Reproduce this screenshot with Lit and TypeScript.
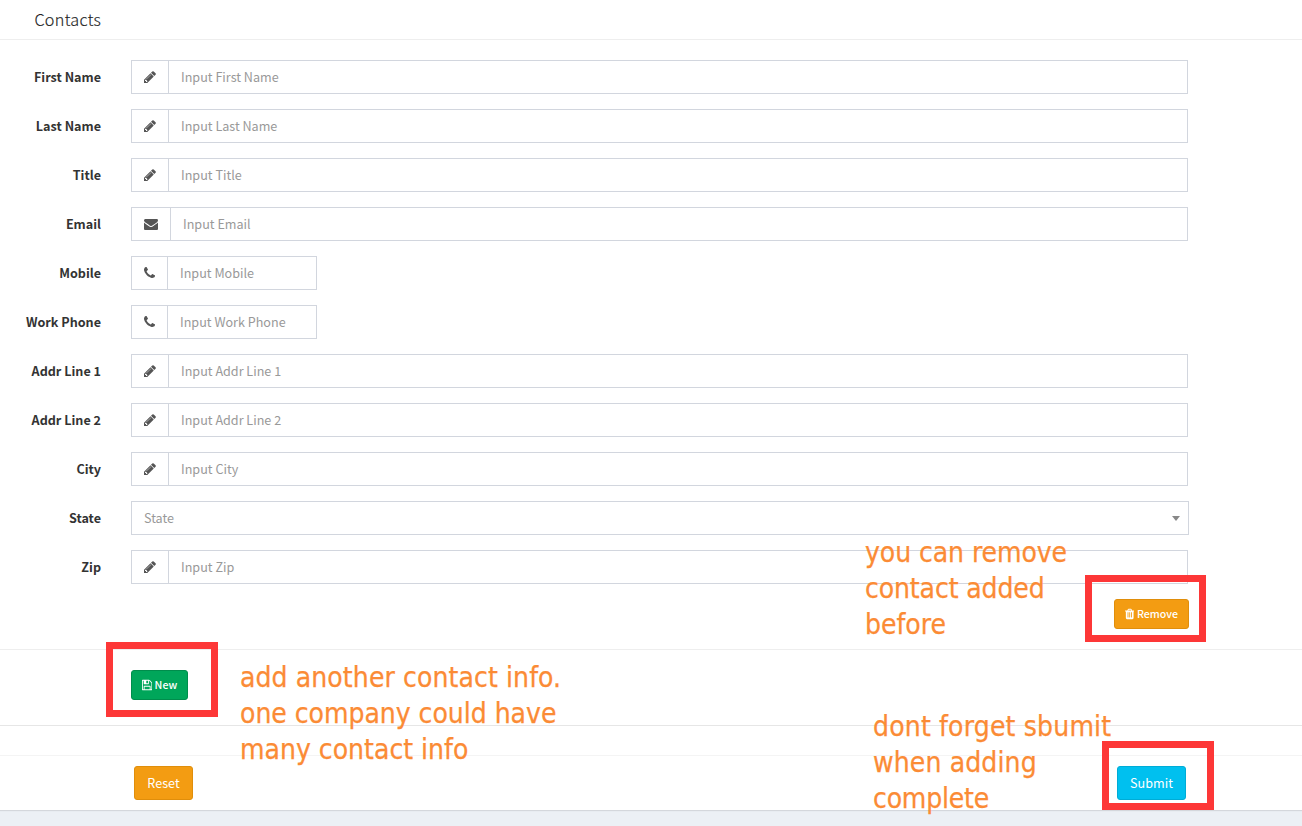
import { LitElement, html, css, svg } from "lit";
import { customElement } from "lit/decorators.js";
import { styleMap } from "lit/directives/style-map.js";
import { classMap } from "lit/directives/class-map.js";

type IconName = "pencil" | "envelope" | "phone" | "trash" | "floppy";

// Glyphs share a 1792-unit em; x and w give the horizontal slice each one occupies.
const ICONS: Record<IconName, { x: number; w: number; d: string }> = {
  pencil: {
    x: 128, w: 1536,
    d: "M491 1536l91-91-235-235-91 91v107h128v128h107zm523-928q0-22-22-22-10 0-17 7l-542 542q-7 7-7 17 0 22 22 22 10 0 17-7l542-542q7-7 7-17zm-54-192l416 416-832 832h-416v-416l832-832zm683 96q0 53-37 90l-166 166-416-416 166-165q36-38 90-38 53 0 91 38l235 234q37 39 37 91z",
  },
  envelope: {
    x: 0, w: 1792,
    d: "M1792 710v794q0 66-47 113t-113 47h-1472q-66 0-113-47t-47-113v-794q44 49 101 87 362 246 497 345 57 42 92.5 65.5t94.5 48 110 24.5h2q51 0 110-24.5t94.5-48 92.5-65.5q170-123 498-345 57-39 100-87zm0-294q0 79-49 151t-122 123q-376 261-468 325-10 7-42.5 31t-54 38.5-52 32.5-57.5 27-50 9h-2q-23 0-50-9t-57.5-27-52-32.5-54-38.5-42.5-31q-91-64-262-182.5t-205-142.5q-62-42-117-115.5t-55-136.5q0-78 41.5-130t118.5-52h1472q65 0 112.5 47t47.5 113z",
  },
  phone: {
    x: 192, w: 1408,
    d: "M1600 1240q0 27-10 70.5t-21 68.5q-21 50-122 106-94 51-186 51-27 0-53-3.5t-57.5-12.5-47-14.5-55.5-20.5-49-18q-98-35-175-83-127-79-264-216t-216-264q-48-77-83-175-3-9-18-49t-20.5-55.5-14.5-47-12.5-57.5-3.5-53q0-92 51-186 56-101 106-122 25-11 68.5-21t70.5-10q14 0 21 3 18 6 53 76 11 19 30 54t35 63.5 31 53.5q3 4 17.5 25t21.5 35.5 7 28.5q0 20-28.5 50t-62 55-62 53-28.5 46q0 9 5 22.5t8.5 20.5 14 24 11.5 19q76 137 174 235t235 174q2 1 19 11.5t24 14 20.5 8.5 22.5 5q18 0 46-28.5t53-62 55-62 50-28.5q14 0 28.5 7t35.5 21.5 25 17.5q25 15 53.5 31t63.5 35 54 30q70 35 76 53 3 7 3 21z",
  },
  trash: {
    x: 192, w: 1408,
    d: "M704 1376v-704q0-14-9-23t-23-9h-64q-14 0-23 9t-9 23v704q0 14 9 23t23 9h64q14 0 23-9t9-23zm256 0v-704q0-14-9-23t-23-9h-64q-14 0-23 9t-9 23v704q0 14 9 23t23 9h64q14 0 23-9t9-23zm256 0v-704q0-14-9-23t-23-9h-64q-14 0-23 9t-9 23v704q0 14 9 23t23 9h64q14 0 23-9t9-23zm-544-992h448l-48-117q-7-9-17-11h-317q-10 2-17 11zm928 32v64q0 14-9 23t-23 9h-96v948q0 83-47 143.5t-113 60.5h-832q-66 0-113-58.5t-47-141.5v-952h-96q-14 0-23-9t-9-23v-64q0-14 9-23t23-9h309l70-167q15-37 54-63t79-26h320q40 0 79 26t54 63l70 167h309q14 0 23 9t9 23z",
  },
  floppy: {
    x: 128, w: 1536,
    d: "M512 1536h768v-384h-768v384zm896 0h128v-896q0-14-10-38.5t-20-34.5l-281-281q-10-10-34-20t-39-10v416q0 40-28 68t-68 28h-576q-40 0-68-28t-28-68v-416h-128v1280h128v-416q0-40 28-68t68-28h832q40 0 68 28t28 68v416zm-384-928v-320q0-13-9.5-22.5t-22.5-9.5h-192q-13 0-22.5 9.5t-9.5 22.5v320q0 13 9.5 22.5t22.5 9.5h192q13 0 22.5-9.5t9.5-22.5zm640 32v928q0 40-28 68t-68 28h-1344q-40 0-68-28t-28-68v-1344q0-40 28-68t68-28h928q40 0 88 20t76 48l280 280q28 28 48 76t20 88z",
  },
};

function icon(name: IconName, size: number) {
  const { x, w, d } = ICONS[name];
  return html`<svg width=${(w / 1792) * size} height=${size} viewBox="${x} 0 ${w} 1792" aria-hidden="true">
    ${svg`<path fill="currentColor" d=${d}></path>`}
  </svg>`;
}

interface Field {
  label: string;
  placeholder: string;
  icon?: IconName;
  short?: boolean;
}

const FIELDS: Field[] = [
  { label: "First Name", placeholder: "Input First Name", icon: "pencil" },
  { label: "Last Name", placeholder: "Input Last Name", icon: "pencil" },
  { label: "Title", placeholder: "Input Title", icon: "pencil" },
  { label: "Email", placeholder: "Input Email", icon: "envelope" },
  { label: "Mobile", placeholder: "Input Mobile", icon: "phone", short: true },
  { label: "Work Phone", placeholder: "Input Work Phone", icon: "phone", short: true },
  { label: "Addr Line 1", placeholder: "Input Addr Line 1", icon: "pencil" },
  { label: "Addr Line 2", placeholder: "Input Addr Line 2", icon: "pencil" },
  { label: "City", placeholder: "Input City", icon: "pencil" },
  { label: "State", placeholder: "State" },
  { label: "Zip", placeholder: "Input Zip", icon: "pencil" },
];

// Each note line is [text, tracking in px].
const NOTES: { x: number; y: number; lines: [string, number][] }[] = [
  { x: 865, y: 535, lines: [["you can remove", -0.08], ["contact added", -0.12], ["before", 0]] },
  { x: 240, y: 660, lines: [["add another contact info.", 0.09], ["one company could have", -0.03], ["many contact info", 0]] },
  { x: 873, y: 709, lines: [["dont forget sbumit", 0.17], ["when adding", 0.12], ["complete", -0.2]] },
];

const FRAMES = [
  { x: 1085, y: 575, w: 121, h: 67 },
  { x: 106, y: 642, w: 112, h: 75 },
  { x: 1102, y: 741, w: 112, h: 69 },
];

@customElement("app-root")
export class AppRoot extends LitElement {
  static styles = css`
    :host {
      display: block;
      position: relative;
      box-sizing: border-box;
      height: 826px;
      overflow: hidden;
      background: #ecf0f5;
      color: #333;
      font: 12.6px/20px "Noto Sans CJK SC", "Noto Sans", sans-serif;
    }
    * { box-sizing: border-box; }
    svg { display: block; flex: none; }
    .box {
      height: 810px;
      background: #fff;
      box-shadow: 0 1px 1px rgba(0, 0, 0, 0.1);
      display: flex;
      flex-direction: column;
    }
    .header {
      height: 40px;
      padding: 0 0 1px 34.4px;
      border-bottom: 1px solid #eee;
      display: flex;
      align-items: center;
      font-size: 16.2px;
      font-weight: 300;
      letter-spacing: 0.32px;
      color: #222;
      -webkit-text-stroke: 0.15px #222;
    }
    .form {
      display: flex;
      flex-direction: column;
      gap: 15px;
      padding-top: 20px;
      height: 610px;
      border-bottom: 1px solid #eee;
    }
    .row {
      display: flex;
      gap: 30px;
      height: 34px;
      align-items: center;
    }
    .label {
      width: 101px;
      text-align: right;
      font-weight: 700;
      white-space: nowrap;
    }
    .group {
      display: flex;
      width: 1057px;
      height: 34px;
      border: 1px solid #d2d6de;
      color: #999;
    }
    .short { width: 186px; }
    .select {
      width: 1058px;
      justify-content: space-between;
      align-items: center;
      padding: 0 8px 0 12px;
    }
    .arrow {
      border: 4px solid transparent;
      border-top: 5px solid #888;
      border-bottom: 0;
    }
    .addon {
      display: flex;
      align-items: center;
      padding: 0 12px;
      color: #555;
      border-right: 1px solid #d2d6de;
    }
    .value {
      flex: 1;
      padding-left: 12px;
      display: flex;
      align-items: center;
      white-space: nowrap;
    }
    .btn {
      display: flex;
      align-items: center;
      justify-content: center;
      gap: 2.5px;
      height: 34px;
      border: 1px solid;
      border-radius: 3px;
      color: #fff;
      white-space: nowrap;
    }
    .small { height: 30px; font-size: 10.6px; font-weight: 500; }
    .warning { background: #f39c12; border-color: #e08e0b; }
    .success { background: #00a65a; border-color: #008d4c; }
    .info { background: #00c0ef; border-color: #00acd6; }
    .remove { width: 75px; }
    .new { width: 57px; }
    .reset { width: 59px; }
    .submit { width: 69px; }
    .removeRow { display: flex; justify-content: flex-end; padding-right: 113px; }
    .newRow {
      height: 76px;
      padding: 20px 0 0 131px;
      display: flex;
      align-items: flex-start;
      border-bottom: 1px solid #e6e6e6;
    }
    .spacer { height: 30px; border-bottom: 1px solid #f4f4f4; }
    .footer {
      display: flex;
      justify-content: space-between;
      padding: 10px 116px 0 134px;
    }
    .note {
      position: absolute;
      color: #fb8b35;
      font: 28px/36px "DejaVu Sans Condensed", "DejaVu Sans", sans-serif;
      font-stretch: condensed;
      -webkit-text-stroke: 0.25px #fb8b35;
      white-space: nowrap;
    }
    .frame {
      position: absolute;
      border: 7px solid #fd3737;
    }
  `;

  private field(f: Field) {
    return html`<div class="row">
      <div class="label">${f.label}</div>
      ${f.icon
        ? html`<div class=${classMap({ group: true, short: !!f.short })}>
            <div class="addon">${icon(f.icon, 14)}</div>
            <div class="value">${f.placeholder}</div>
          </div>`
        : html`<div class="group select"><span>${f.placeholder}</span><i class="arrow"></i></div>`}
    </div>`;
  }

  render() {
    return html`
      <div class="box">
        <div class="header">Contacts</div>
        <div class="form">
          ${FIELDS.map((f) => this.field(f))}
          <div class="removeRow">
            <div class="btn small warning remove">${icon("trash", 12)}<span>Remove</span></div>
          </div>
        </div>
        <div class="newRow">
          <div class="btn small success new">${icon("floppy", 12)}<span>New</span></div>
        </div>
        <div class="spacer"></div>
        <div class="footer">
          <div class="btn warning reset">Reset</div>
          <div class="btn info submit">Submit</div>
        </div>
      </div>
      ${NOTES.map(
        (n) => html`<div class="note" style=${styleMap({ left: `${n.x}px`, top: `${n.y}px` })}>
          ${n.lines.map(([text, tracking]) => html`<div style=${styleMap({ letterSpacing: `${tracking}px` })}>${text}</div>`)}
        </div>`
      )}
      ${FRAMES.map(
        (r) => html`<div
          class="frame"
          style=${styleMap({ left: `${r.x}px`, top: `${r.y}px`, width: `${r.w}px`, height: `${r.h}px` })}
        ></div>`
      )}
    `;
  }
}
